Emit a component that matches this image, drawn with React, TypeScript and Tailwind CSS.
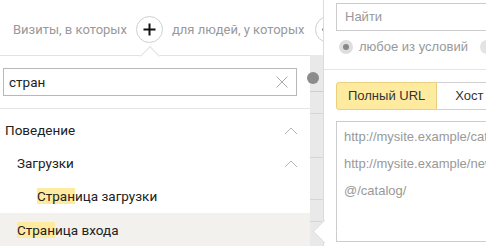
import React from "react";

const sans = { fontFamily: "Roboto, 'Liberation Sans', Arial, sans-serif" };
const arial = { fontFamily: "'Liberation Sans', Arial, sans-serif" };

function ChevronUp() {
  return (
    <svg width="14" height="8" viewBox="0 0 14 8" fill="none">
      <path d="M1 7L7 1L13 7" stroke="#b5b5b5" strokeWidth="1" />
    </svg>
  );
}

function Hl({ children }: { children: React.ReactNode }) {
  return <span className="bg-[#ffeba0]">{children}</span>;
}

export default function App() {
  return (
    <div className="w-[486px] h-[246px] bg-white overflow-hidden flex relative" style={sans}>
      {/* Left column */}
      <div className="w-[323px] shrink-0 flex flex-col overflow-hidden relative">
        <div className="h-[55px] shrink-0 flex items-start pt-[16px] pl-[13px] gap-[9px] text-[13px] text-[#999] whitespace-nowrap">
          <span className="leading-[28px]">Визиты, в которых</span>
          <div className="w-[27px] h-[27px] rounded-full border border-[#cfcfcf] flex items-center justify-center shrink-0">
            <svg width="13" height="13" viewBox="0 0 13 13">
              <path d="M6.5 0.5V12.5M0.5 6.5H12.5" stroke="#111" strokeWidth="2" />
            </svg>
          </div>
          <span className="leading-[28px]">для людей, у которых</span>
          <div className="w-[27px] h-[27px] rounded-full border border-[#cfcfcf] flex items-center justify-center shrink-0 ml-[2px]">
            <svg width="13" height="13" viewBox="0 0 13 13">
              <path d="M0.5 6.5H12.5" stroke="#111" strokeWidth="2" />
            </svg>
          </div>
        </div>
        <div className="flex flex-1 min-h-0">
          {/* Popup */}
          <div className="w-[310px] shrink-0 bg-white border-t border-[#e2e2e2] flex flex-col">
            <div className="pt-[12px] pb-[12px] pl-[3px] pr-[13px] border-b border-[#e5e5e5]">
              <div className="h-[28px] border border-[#b8b8b8] flex items-center pl-[5px] pr-[8px] justify-between">
                <span className="text-[13.5px] text-[#222]">стран</span>
                <svg width="12" height="12" viewBox="0 0 12 12">
                  <path d="M0.5 0.5L11.5 11.5M11.5 0.5L0.5 11.5" stroke="#aaa" strokeWidth="1" />
                </svg>
              </div>
            </div>
            <div className="pt-[5px] flex flex-col text-[13.5px] text-[#222]">
              <div className="h-[33px] flex items-center justify-between pl-[5px] pr-[12px]">
                <span>Поведение</span>
                <ChevronUp />
              </div>
              <div className="h-[33px] flex items-center justify-between pl-[17px] pr-[12px]">
                <span>Загрузки</span>
                <ChevronUp />
              </div>
              <div className="h-[33px] flex items-center pl-[37px]">
                <span>
                  <Hl>Стран</Hl>ица загрузки
                </span>
              </div>
              <div className="h-[34px] flex items-center pl-[17px] bg-[#f2f1ee]">
                <span>
                  <Hl>Стран</Hl>ица входа
                </span>
              </div>
            </div>
          </div>
          {/* Gray strip (table behind) */}
          <div className="flex-1 bg-[#e9e9e9] relative flex flex-col">
            <div className="h-[37px] border-b border-[#cfcfcf]" />
            <div className="h-[22px] border-b border-[#d6d6d6]" />
            <div className="h-[44px] border-b border-[#d6d6d6]" />
            <div className="h-[42px] border-b border-[#d6d6d6]" />
            <div className="h-[22px] border-b border-[#d6d6d6]" />
            <div className="absolute left-[-3px] top-[17px] w-[12px] h-[12px] rounded-full bg-[#8c8c8c]" />
          </div>
        </div>
        {/* caret of popup */}
        <div className="absolute left-[143px] top-[49px] w-[14px] h-[14px] bg-white border-l border-t border-[#e2e2e2] rotate-45" />
      </div>

      {/* Right panel */}
      <div className="flex-1 border-l border-[#dcdcdc] bg-white relative" style={arial}>
        <div className="absolute left-[-8px] top-[223px] w-[17px] h-[17px] bg-white border-l border-b border-[#dcdcdc] rotate-45" />
        <div className="pl-[12px] pt-[3px]">
          <div className="h-[28px] border border-[#cccccc] border-r-0 flex items-center pl-[8px] text-[13px] text-[#999]">
            Найти
          </div>
          <div className="h-[32px] flex items-center gap-[6px] pl-[3px] text-[13px] text-[#999] whitespace-nowrap">
            <div className="w-[14px] h-[14px] rounded-full bg-[#dedede] flex items-center justify-center">
              <div className="w-[6px] h-[6px] rounded-full bg-[#888]" />
            </div>
            <span>любое из условий</span>
            <div className="w-[14px] h-[14px] rounded-full bg-[#e3e3e3] ml-[6px]" />
          </div>
        </div>
        <div className="border-t border-[#e5e5e5] mt-[6px]" />
        <div className="pl-[12px] pt-[12px]">
          <div className="flex h-[28px] text-[13px] text-[#333]">
            <div className="px-[11px] flex items-center bg-[#ffeba0] border border-[#e8d07e] rounded-l-[3px]">
              Полный URL
            </div>
            <div className="px-[18px] flex items-center border border-l-0 border-[#d0d0d0]">Хост</div>
          </div>
          <div className="mt-[11px] h-[121px] border border-[#cccccc] border-r-0 pl-[7px] pt-[1px] text-[13px] text-[#999] whitespace-nowrap leading-[27px]">
            <div>http://mysite.example/catalog/</div>
            <div>http://mysite.example/news/</div>
            <div>@/catalog/</div>
          </div>
        </div>
      </div>
    </div>
  );
}
